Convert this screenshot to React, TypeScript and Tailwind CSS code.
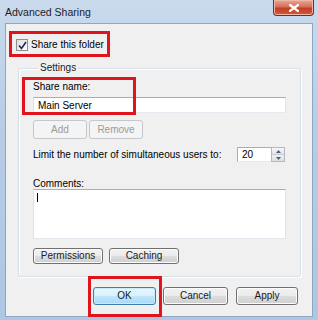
import React from 'react';

function WinButton({
  label,
  width,
  height,
  disabled,
  isDefault,
}: {
  label: string;
  width: number;
  height: number;
  disabled?: boolean;
  isDefault?: boolean;
}) {
  const base =
    'flex items-center justify-center rounded-[3px] border text-[10px] leading-none';
  const look = disabled
    ? 'border-[#c4c8cb] bg-[#f4f4f4] text-[#9a9a9a]'
    : isDefault
      ? 'border-[#3c7fb1] bg-[linear-gradient(#eaf6fd_0%,#d9f0fc_50%,#bee6fd_51%,#a7d9f5_100%)] text-[#1a1a1a] shadow-[inset_0_0_0_1px_#c8eafb]'
      : 'border-[#707070] bg-[linear-gradient(#f2f2f2_0%,#ebebeb_50%,#dddddd_51%,#cfcfcf_100%)] text-[#1a1a1a] shadow-[inset_0_0_0_1px_#fcfcfc]';
  return (
    <div className={`${base} ${look}`} style={{ width, height }}>
      {label}
    </div>
  );
}

export default function App() {
  return (
    <div className="relative h-[320px] w-[318px] overflow-hidden bg-[linear-gradient(180deg,#c9daed_0%,#b7cde6_40%,#aec6e2_100%)] font-['Liberation_Sans',Arial,sans-serif] text-black">
      {/* title bar */}
      <div className="flex h-[23px] items-start justify-between pl-[5px] pr-[4px]">
        <div className="pt-[5px] text-[10.5px] leading-[14px] text-[#1c1c1c]">
          Advanced Sharing
        </div>
        <div className="flex h-[16px] w-[41px] items-center justify-center rounded-b-[4px] border border-t-0 border-[#7a2a1e] bg-[linear-gradient(180deg,#e8a797_0%,#d6705b_45%,#c43f25_55%,#d05a38_100%)] shadow-[inset_0_0_0_1px_#f0b8a8]">
          <svg width="10" height="8" viewBox="0 0 10 8">
            <path
              d="M1 1 L9 7 M9 1 L1 7"
              stroke="#ffffff"
              strokeWidth="2.2"
              strokeLinecap="square"
            />
          </svg>
        </div>
      </div>

      {/* dialog body */}
      <div className="mx-[5px] flex h-[294px] flex-col border border-[#8ea6c2] bg-[#f0f0f0]">
        <label className="ml-[10px] mt-[15px] flex items-center gap-[3px] text-[10px] leading-[12px]">
          <span className="flex h-[12px] w-[12px] items-center justify-center border border-[#8e8f8f] bg-[linear-gradient(135deg,#dcdcdc,#ffffff)]">
            <svg width="9" height="9" viewBox="0 0 9 9">
              <path
                d="M1 4.5 L3.5 7.5 L8 1"
                fill="none"
                stroke="#1b2a5a"
                strokeWidth="1.6"
              />
            </svg>
          </span>
          Share this folder
        </label>

        <fieldset className="ml-[12px] mt-[11px] h-[215px] w-[282px] rounded-[3px] border border-[#d5dfe5] px-[14px] shadow-[inset_1px_1px_0_#ffffff,1px_1px_0_#ffffff]">
          <legend className="ml-[5px] px-[2px] text-[10px] leading-[12px] text-[#1a1a1a]">
            Settings
          </legend>

          <div className="mt-[6px] text-[10px] leading-[14px]">Share name:</div>
          <div className="mt-[3px] flex h-[16px] w-[253px] items-center border border-[#abadb3] border-x-[#e2e3ea] border-b-[#e3e9ef] bg-white pl-[4px] text-[10px]">
            Main Server
          </div>

          <div className="mt-[7px] flex gap-[2px]">
            <WinButton label="Add" width={54} height={19} disabled />
            <WinButton label="Remove" width={54} height={19} disabled />
          </div>

          <div className="mt-[8px] flex items-center justify-between whitespace-nowrap pr-[1px] text-[10px]">
            <span>Limit the number of simultaneous users to:</span>
            <div className="flex h-[15px] items-stretch">
              <div className="flex w-[34px] items-center border border-[#abadb3] border-r-0 border-b-[#e3e9ef] bg-white pl-[4px] text-[10px]">
                20
              </div>
              <div className="flex w-[14px] flex-col border border-[#b5b8bc]">
                <div className="flex flex-1 items-center justify-center border-b border-[#c9cccf] bg-[linear-gradient(#f6f6f6,#e4e4e4)]">
                  <svg width="5" height="3" viewBox="0 0 5 3">
                    <path d="M0 3 L2.5 0 L5 3 Z" fill="#4d6185" />
                  </svg>
                </div>
                <div className="flex flex-1 items-center justify-center bg-[linear-gradient(#f0f0f0,#dedede)]">
                  <svg width="5" height="3" viewBox="0 0 5 3">
                    <path d="M0 0 L2.5 3 L5 0 Z" fill="#4d6185" />
                  </svg>
                </div>
              </div>
            </div>
          </div>

          <div className="mt-[16px] text-[10px] leading-[12px]">Comments:</div>
          <div className="-mt-[1px] h-[50px] w-[253px] border border-[#abadb3] border-x-[#e2e3ea] border-b-[#e3e9ef] bg-white pl-[3px] pt-[3px]">
            <div className="h-[9px] w-px bg-black" />
          </div>

          <div className="mt-[9px] flex gap-[6px]">
            <WinButton label="Permissions" width={70} height={16} />
            <WinButton label="Caching" width={70} height={16} />
          </div>
        </fieldset>

        <div className="mr-[14px] mt-[10px] flex justify-end">
          <WinButton label="OK" width={63} height={18} isDefault />
          <div className="ml-[7px]">
            <WinButton label="Cancel" width={65} height={18} />
          </div>
          <div className="ml-[8px]">
            <WinButton label="Apply" width={62} height={18} />
          </div>
        </div>
      </div>

      {/* red annotation boxes */}
      <div className="absolute left-[9px] top-[31px] h-[26px] w-[101px] border-[3px] border-[#e0141c]" />
      <div className="absolute left-[22px] top-[77px] h-[38px] w-[114px] border-[3px] border-[#e0141c]" />
      <div className="absolute left-[88px] top-[276px] h-[41px] w-[74px] border-[3px] border-[#e0141c]" />
    </div>
  );
}
